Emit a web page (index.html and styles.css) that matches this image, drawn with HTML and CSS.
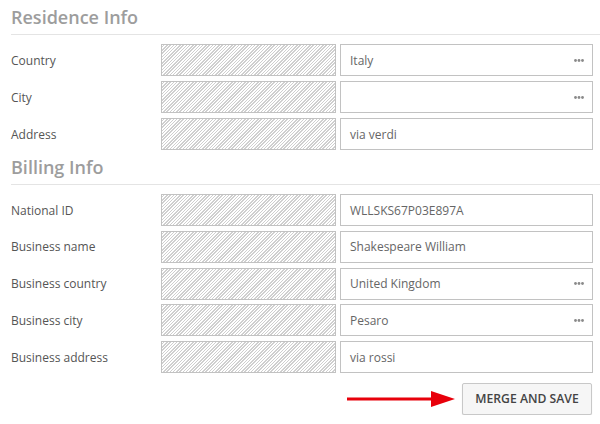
FILE: index.html
```html
<!DOCTYPE html>
<html>
<head>
<meta charset="utf-8">
<link rel="stylesheet" href="styles.css">
</head>
<body>
<div class="page">
  <section class="section">
    <h2 class="heading">Residence Info</h2>
    <div class="rows">
      <div class="row"><div class="label">Country</div><div class="hatch"></div><div class="value">Italy<svg class="dots" width="10" height="3" viewBox="0 0 10 3"><circle cx="1.5" cy="1.5" r="1.4"/><circle cx="5" cy="1.5" r="1.4"/><circle cx="8.5" cy="1.5" r="1.4"/></svg></div></div>
      <div class="row"><div class="label">City</div><div class="hatch"></div><div class="value"><svg class="dots" width="10" height="3" viewBox="0 0 10 3"><circle cx="1.5" cy="1.5" r="1.4"/><circle cx="5" cy="1.5" r="1.4"/><circle cx="8.5" cy="1.5" r="1.4"/></svg></div></div>
      <div class="row"><div class="label">Address</div><div class="hatch"></div><div class="value">via verdi</div></div>
    </div>
  </section>
  <section class="section billing">
    <h2 class="heading">Billing Info</h2>
    <div class="rows">
      <div class="row"><div class="label">National ID</div><div class="hatch"></div><div class="value">WLLSKS67P03E897A</div></div>
      <div class="row"><div class="label">Business name</div><div class="hatch"></div><div class="value">Shakespeare William</div></div>
      <div class="row"><div class="label">Business country</div><div class="hatch"></div><div class="value">United Kingdom<svg class="dots" width="10" height="3" viewBox="0 0 10 3"><circle cx="1.5" cy="1.5" r="1.4"/><circle cx="5" cy="1.5" r="1.4"/><circle cx="8.5" cy="1.5" r="1.4"/></svg></div></div>
      <div class="row"><div class="label">Business city</div><div class="hatch"></div><div class="value">Pesaro<svg class="dots" width="10" height="3" viewBox="0 0 10 3"><circle cx="1.5" cy="1.5" r="1.4"/><circle cx="5" cy="1.5" r="1.4"/><circle cx="8.5" cy="1.5" r="1.4"/></svg></div></div>
      <div class="row"><div class="label">Business address</div><div class="hatch"></div><div class="value">via rossi</div></div>
    </div>
  </section>
  <div class="actions">
    <svg class="arrow" width="108" height="18" viewBox="0 0 108 18">
      <rect x="0" y="7.5" width="86" height="3" fill="#e8000b"/>
      <polygon points="84,1 108,9 84,17" fill="#e8000b"/>
    </svg>
    <button class="btn">MERGE AND SAVE</button>
  </div>
</div>
</body>
</html>
```
FILE: styles.css
```css
html, body {
  margin: 0;
  padding: 0;
  background: #fff;
}
body {
  font-family: "Open Sans", "Liberation Sans", sans-serif;
  color: #555;
}
.page {
  padding-left: 11px;
}
.heading {
  margin: 0;
  height: 34px;
  line-height: 34px;
  font-size: 18px;
  font-weight: 600;
  color: #9d9d9d;
  border-bottom: 1px solid #e4e4e4;
}
.rows {
  display: flex;
  flex-direction: column;
  gap: 5px;
  padding-top: 9px;
}
.billing .rows {
  gap: 4.75px;
}
.row {
  display: flex;
  align-items: center;
  height: 32px;
}
.label {
  width: 150px;
  font-size: 12px;
  color: #555;
}
.hatch {
  box-sizing: border-box;
  width: 175px;
  height: 32px;
  border: 1px solid #c2c2c2;
  background: repeating-linear-gradient(-45deg, #fff 0, #fff 1.3px, #cfcfcf 1.3px, #cfcfcf 2.3px);
}
.value {
  box-sizing: border-box;
  margin-left: 4px;
  width: 253px;
  height: 32px;
  border: 1px solid #c2c2c2;
  padding: 0 8px 0 9px;
  display: flex;
  align-items: center;
  justify-content: space-between;
  font-size: 12px;
  color: #666;
}
.dots {
  display: block;
  margin-left: auto;
  fill: #8a8a8a;
}
.actions {
  display: flex;
  justify-content: flex-end;
  align-items: center;
  padding-right: 8px;
  margin-top: 9.5px;
}
.arrow {
  display: block;
  margin-right: 7px;
}
.btn {
  box-sizing: border-box;
  width: 130px;
  height: 32px;
  border: 1px solid #c8c8c8;
  border-radius: 2px;
  background: #f6f6f6;
  box-shadow: 0 1px 1px rgba(0,0,0,0.12);
  font-family: "Open Sans", "Liberation Sans", sans-serif;
  font-size: 12.2px;
  font-weight: 600;
  color: #444;
  padding: 0;
}
```
